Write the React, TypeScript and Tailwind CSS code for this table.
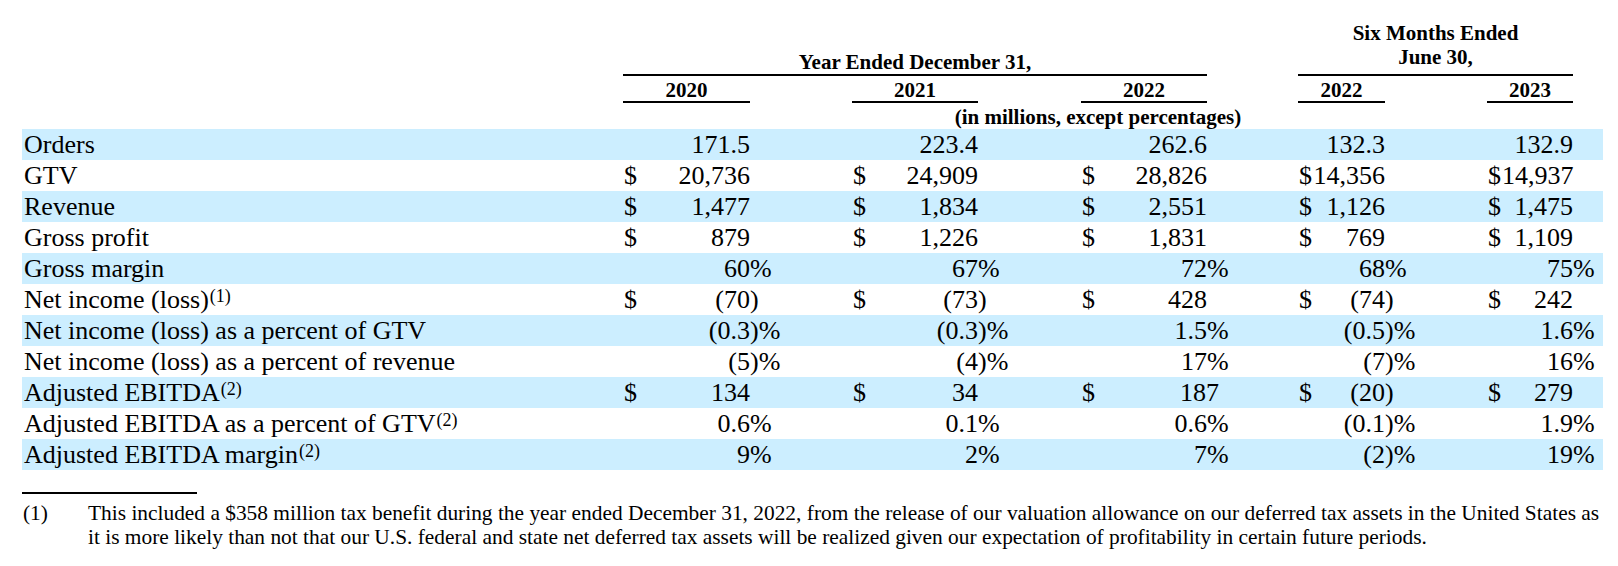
import type { ReactNode } from "react";

type Cell = { d?: string; v: string; s?: string; nudge?: boolean };

const rows: { label: ReactNode; cells: Cell[] }[] = [
  { label: "Orders", cells: [{ v: "171.5" }, { v: "223.4" }, { v: "262.6" }, { v: "132.3" }, { v: "132.9" }] },
  {
    label: "GTV",
    cells: [
      { d: "$", v: "20,736" },
      { d: "$", v: "24,909" },
      { d: "$", v: "28,826" },
      { d: "$", v: "14,356" },
      { d: "$", v: "14,937" },
    ],
  },
  {
    label: "Revenue",
    cells: [
      { d: "$", v: "1,477" },
      { d: "$", v: "1,834" },
      { d: "$", v: "2,551" },
      { d: "$", v: "1,126" },
      { d: "$", v: "1,475" },
    ],
  },
  {
    label: "Gross profit",
    cells: [
      { d: "$", v: "879" },
      { d: "$", v: "1,226" },
      { d: "$", v: "1,831" },
      { d: "$", v: "769" },
      { d: "$", v: "1,109" },
    ],
  },
  {
    label: "Gross margin",
    cells: [
      { v: "60", s: "%" },
      { v: "67", s: "%" },
      { v: "72", s: "%" },
      { v: "68", s: "%" },
      { v: "75", s: "%" },
    ],
  },
  {
    label: (
      <>
        Net income (loss)<Sup n={1} />
      </>
    ),
    cells: [
      { d: "$", v: "(70", s: ")" },
      { d: "$", v: "(73", s: ")" },
      { d: "$", v: "428" },
      { d: "$", v: "(74", s: ")" },
      { d: "$", v: "242" },
    ],
  },
  {
    label: "Net income (loss) as a percent of GTV",
    cells: [
      { v: "(0.3", s: ")%" },
      { v: "(0.3", s: ")%" },
      { v: "1.5", s: "%" },
      { v: "(0.5", s: ")%" },
      { v: "1.6", s: "%" },
    ],
  },
  {
    label: "Net income (loss) as a percent of revenue",
    cells: [
      { v: "(5", s: ")%" },
      { v: "(4", s: ")%" },
      { v: "17", s: "%" },
      { v: "(7", s: ")%" },
      { v: "16", s: "%" },
    ],
  },
  {
    label: (
      <>
        Adjusted EBITDA<Sup n={2} />
      </>
    ),
    cells: [
      { d: "$", v: "134" },
      { d: "$", v: "34" },
      { d: "$", v: "187", nudge: true },
      { d: "$", v: "(20", s: ")" },
      { d: "$", v: "279" },
    ],
  },
  {
    label: (
      <>
        Adjusted EBITDA as a percent of GTV<Sup n={2} />
      </>
    ),
    cells: [
      { v: "0.6", s: "%" },
      { v: "0.1", s: "%" },
      { v: "0.6", s: "%" },
      { v: "(0.1", s: ")%" },
      { v: "1.9", s: "%" },
    ],
  },
  {
    label: (
      <>
        Adjusted EBITDA margin<Sup n={2} />
      </>
    ),
    cells: [
      { v: "9", s: "%" },
      { v: "2", s: "%" },
      { v: "7", s: "%" },
      { v: "(2", s: ")%" },
      { v: "19", s: "%" },
    ],
  },
];

// column widths per group: dollar sign, number, suffix, gap after
const groups = [
  { d: "w-[27px]", v: "w-[100px]", s: "w-[26px]", gap: "w-[76px]" },
  { d: "w-[27px]", v: "w-[99px]", s: "w-[26px]", gap: "w-[77px]" },
  { d: "w-[27px]", v: "w-[99px]", s: "w-[26px]", gap: "w-[65px]" },
  { d: "w-[15px]", v: "w-[72px]", s: "w-[26px]", gap: "w-[76px]" },
  { d: "w-[15px]", v: "w-[71px]", s: "w-[30px]", gap: "w-0" },
];

function Sup({ n }: { n: number }) {
  return <sup className="top-[-6px] pl-[1px] text-[18px]">({n})</sup>;
}

function Line({ className, children }: { className: string; children: ReactNode }) {
  return <div className={`shrink-0 border-b-2 border-black text-center ${className}`}>{children}</div>;
}

export default function App() {
  return (
    <div className="h-[566px] w-[1618px] bg-white pl-[22px] pt-[21px] font-['Liberation_Serif',serif] text-black">
      {/* column headers */}
      <div className="text-[21px] font-bold leading-[22px]">
        <div className="flex items-end">
          <div className="w-[601px] shrink-0" />
          <Line className="w-[584px] pb-[1px]">Year Ended December 31,</Line>
          <div className="w-[91px] shrink-0" />
          <Line className="w-[275px] pb-[5px] leading-[24px]">
            <div>Six Months Ended</div>
            <div>June 30,</div>
          </Line>
        </div>
        <div className="mt-[3px] flex">
          <div className="w-[601px] shrink-0" />
          <Line className="w-[127px]">2020</Line>
          <div className="w-[102px] shrink-0" />
          <Line className="w-[126px]">2021</Line>
          <div className="w-[103px] shrink-0" />
          <Line className="w-[126px]">2022</Line>
          <div className="w-[91px] shrink-0" />
          <Line className="w-[87px]">2022</Line>
          <div className="w-[102px] shrink-0" />
          <Line className="w-[86px]">2023</Line>
        </div>
        <div className="mt-[3px] flex">
          <div className="w-[601px] shrink-0" />
          <div className="w-[950px] shrink-0 text-center">(in millions, except percentages)</div>
        </div>
      </div>

      {/* data rows */}
      <div className="mt-[1px] w-[1581px] text-[26px] leading-[31px]">
        {rows.map((row, i) => (
          <div key={i} className={`flex h-[31px] ${i % 2 === 0 ? "bg-[#cceeff]" : ""}`}>
            <div className="w-[601px] shrink-0 whitespace-nowrap pl-[2px]">{row.label}</div>
            {row.cells.map((c, j) => (
              <div key={j} className="flex shrink-0">
                <div className={`${groups[j].d} pl-[1px]`}>{c.d}</div>
                <div className={`${groups[j].v} text-right whitespace-nowrap`}>
                  <span className={c.nudge ? "mr-[-12px]" : ""}>{c.v}</span>
                </div>
                <div className={`${groups[j].s} whitespace-nowrap`}>{c.s}</div>
                <div className={groups[j].gap} />
              </div>
            ))}
          </div>
        ))}
      </div>

      {/* footnote */}
      <div className="mt-[22px] h-[2px] w-[175px] bg-black" />
      <div className="mt-[7px] flex text-[21.4px] leading-[24px]">
        <div className="w-[66px] shrink-0 pl-[1px]">(1)</div>
        <div className="whitespace-nowrap">
          <div>
            This included a $358 million tax benefit during the year ended December 31, 2022, from the release of our
            valuation allowance on our deferred tax assets in the United States as
          </div>
          <div>
            it is more likely than not that our U.S. federal and state net deferred tax assets will be realized given our
            expectation of profitability in certain future periods.
          </div>
        </div>
      </div>
    </div>
  );
}
